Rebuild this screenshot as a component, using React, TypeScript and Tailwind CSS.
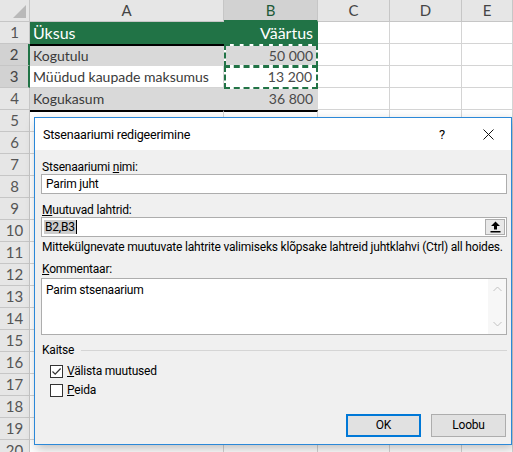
import React from "react";

type Row = {
  a?: string;
  b?: string;
  kind?: "head" | "fill" | "plain";
};

const rows: Row[] = [
  { a: "Üksus", b: "Väärtus", kind: "head" },
  { a: "Kogutulu", b: "50 000", kind: "fill" },
  { a: "Müüdud kaupade maksumus", b: "13 200", kind: "plain" },
  { a: "Kogukasum", b: "36 800", kind: "fill" },
];

const TOTAL_ROWS = 20;

function Sheet() {
  const cells: React.ReactNode[] = [];

  // column header row
  cells.push(
    <div key="corner" className="relative border-b border-r border-[#c6c6c6] bg-[#e6e6e6]">
      <div className="absolute bottom-[3px] right-[3px] h-0 w-0 border-b-[13px] border-l-[13px] border-b-[#b9b9b9] border-l-transparent" />
    </div>
  );
  ["A", "B", "C", "D", "E"].forEach((c) => {
    const sel = c === "B";
    cells.push(
      <div
        key={"h" + c}
        className={
          sel
            ? "flex items-center justify-center border-b-2 border-r border-b-[#217346] border-r-[#c6c6c6] bg-[#d2d2d2] text-[15px] text-[#1d5a38]"
            : "flex items-center justify-center border-b border-r border-[#c6c6c6] bg-[#e6e6e6] text-[15px] text-[#444]"
        }
      >
        {c}
      </div>
    );
  });

  for (let r = 1; r <= TOTAL_ROWS; r++) {
    const data = rows[r - 1];
    const selRow = r === 2 || r === 3;
    cells.push(
      <div
        key={"r" + r}
        className={
          selRow
            ? "flex items-center justify-center border-b border-r-2 border-b-[#c6c6c6] border-r-[#217346] bg-[#d2d2d2] text-[15px] text-[#444]"
            : "flex items-center justify-center border-b border-r border-[#c6c6c6] bg-[#e6e6e6] text-[15px] text-[#555]"
        }
      >
        {r}
      </div>
    );

    const topRule = r === 2 || r === 5 ? " border-t-2 border-t-black" : "";
    if (data?.kind === "head") {
      cells.push(
        <div key={"a" + r} className="flex items-center bg-[#217346] pl-[3px] text-[16px] text-white">
          {data.a}
        </div>
      );
      cells.push(
        <div key={"b" + r} className="flex items-center justify-end bg-[#217346] pr-[5px] text-[16px] text-white">
          {data.b}
        </div>
      );
    } else if (data?.kind === "fill") {
      cells.push(
        <div
          key={"a" + r}
          className={"flex items-center border-b border-[#d9d9d9] bg-[#d9d9d9] pl-[3px] text-[14px] text-[#3a3a3a]" + topRule}
        >
          {data.a}
        </div>
      );
      cells.push(
        <div
          key={"b" + r}
          className={"flex items-center justify-end border-b border-[#d9d9d9] bg-[#d9d9d9] pr-[5px] text-[14px] text-[#4a4a4a]" + topRule}
        >
          {data.b}
        </div>
      );
    } else if (data) {
      cells.push(
        <div key={"a" + r} className="flex items-center border-b border-r border-[#d4d4d4] bg-white pl-[3px] text-[14px] text-[#3a3a3a]">
          {data.a}
        </div>
      );
      cells.push(
        <div key={"b" + r} className="flex items-center justify-end border-b border-r border-[#d4d4d4] bg-white pr-[5px] text-[14px] text-[#4a4a4a]">
          {data.b}
        </div>
      );
    } else {
      cells.push(<div key={"a" + r} className={"border-b border-r border-[#d4d4d4]" + topRule} />);
      cells.push(<div key={"b" + r} className={"border-b border-r border-[#d4d4d4]" + topRule} />);
    }
    cells.push(<div key={"c" + r} className="border-b border-r border-[#d4d4d4]" />);
    cells.push(<div key={"d" + r} className="border-b border-r border-[#d4d4d4]" />);
    cells.push(<div key={"e" + r} className="border-b border-r border-[#d4d4d4]" />);
  }

  return (
    <div className="relative">
      <div className="grid auto-rows-[22px] grid-cols-[30px_194px_94px_72px_72px_51px] font-['Lato'] leading-none">
        {cells}
      </div>
      {/* copy marquee around B2 and B3 */}
      <div className="absolute left-[224px] top-[44px] h-[23px] w-[94px] border-2 border-white">
        <div className="absolute -inset-[2px] border-2 border-dashed border-[#217346]" />
      </div>
      <div className="absolute left-[224px] top-[66px] h-[23px] w-[94px] border-2 border-white">
        <div className="absolute -inset-[2px] border-2 border-dashed border-[#217346]" />
      </div>
    </div>
  );
}

function CheckBox({ checked }: { checked?: boolean }) {
  return (
    <div className="flex h-[13px] w-[13px] items-center justify-center border border-[#333] bg-white">
      {checked && (
        <svg width="11" height="11" viewBox="0 0 11 11">
          <path d="M1.5 5.5 L4.2 8.2 L9.6 2.5" fill="none" stroke="#333" strokeWidth="1.2" />
        </svg>
      )}
    </div>
  );
}

function ScenarioDialog() {
  return (
    <div className="absolute left-[34px] top-[117px] flex h-[328px] w-[478px] flex-col border border-[#2b88d8] bg-[#f0f0f0] font-['Roboto'] text-[12px] leading-[13px] tracking-[-0.2px] text-black shadow-[2px_4px_10px_rgba(0,0,0,0.25)]">
      <div className="flex h-[32px] shrink-0 items-center bg-white pl-[8px]">
        <span className="text-[12.5px]">Stsenaariumi redigeerimine</span>
        <span className="ml-auto flex h-full w-[46px] items-center justify-center text-[13px]">?</span>
        <span className="flex h-full w-[46px] items-center justify-center">
          <svg width="11" height="11" viewBox="0 0 11 11">
            <path d="M0.5 0.5 L10.5 10.5 M10.5 0.5 L0.5 10.5" stroke="#111" strokeWidth="1" />
          </svg>
        </span>
      </div>

      <div className="flex flex-1 flex-col pb-[7px] pl-[6px] pr-[4px] pt-[11px]">
        <div className="pl-[1px]">
          Stsenaariumi <u>n</u>imi:
        </div>
        <div className="flex h-[20px] items-center border border-[#adadad] bg-white pl-[4px]">Parim juht</div>

        <div className="mt-[10px] pl-[1px]">
          <u>M</u>uutuvad lahtrid:
        </div>
        <div className="flex h-[20px] items-center border border-[#adadad] bg-white pl-[2px]">
          <span className="bg-[#cccccc] px-[1px] leading-[14px]">B2,B3</span>
          <span className="h-[14px] w-px bg-black" />
          <span className="ml-auto mr-[1px] flex h-[16px] w-[20px] items-center justify-center border border-[#adadad] bg-[#e8e8e8]">
            <svg width="11" height="12" viewBox="0 0 11 12">
              <path d="M5.5 0.5 L10 5 L7 5 L7 8.5 L4 8.5 L4 5 L1 5 Z" fill="#000" />
              <rect x="0.5" y="10" width="10" height="1.5" fill="#000" />
            </svg>
          </span>
        </div>

        <div className="mt-[4px] whitespace-nowrap pl-[1px]">
          Mittekülgnevate muutuvate lahtrite valimiseks klõpsake lahtreid juhtklahvi (Ctrl) all hoides.
        </div>

        <div className="mt-[9px] pl-[1px]">
          <u>K</u>ommentaar:
        </div>
        <div className="mt-[2px] flex h-[57px] border border-[#adadad] bg-white">
          <div className="flex-1 pl-[4px] pt-[5px]">Parim stsenaarium</div>
          <div className="flex w-[18px] flex-col items-center justify-between bg-[#f7f7f7] py-[7px]">
            <svg width="9" height="6" viewBox="0 0 9 6">
              <path d="M0.5 5 L4.5 1 L8.5 5" fill="none" stroke="#c2c2c2" strokeWidth="1" />
            </svg>
            <svg width="9" height="6" viewBox="0 0 9 6">
              <path d="M0.5 1 L4.5 5 L8.5 1" fill="none" stroke="#c2c2c2" strokeWidth="1" />
            </svg>
          </div>
        </div>

        <div className="mt-[9px] flex items-center pl-[1px]">
          <span>Kaitse</span>
          <span className="ml-[7px] h-px flex-1 bg-[#d5d5d5]" />
        </div>

        <div className="mt-[8px] flex items-center gap-[4px] pl-[9px]">
          <CheckBox checked />
          <span>
            <u>V</u>älista muutused
          </span>
        </div>
        <div className="mt-[6px] flex items-center gap-[4px] pl-[9px]">
          <CheckBox />
          <span>
            <u>P</u>eida
          </span>
        </div>

        <div className="mt-auto flex justify-end gap-[10px] pr-[1px]">
          <div className="flex h-[23px] w-[75px] items-center justify-center border-2 border-[#0078d7] bg-[#e1e1e1]">OK</div>
          <div className="flex h-[23px] w-[75px] items-center justify-center border border-[#adadad] bg-[#e1e1e1]">Loobu</div>
        </div>
      </div>
    </div>
  );
}

export default function App() {
  return (
    <div className="relative h-[452px] w-[513px] overflow-hidden bg-white">
      <Sheet />
      <ScenarioDialog />
    </div>
  );
}
